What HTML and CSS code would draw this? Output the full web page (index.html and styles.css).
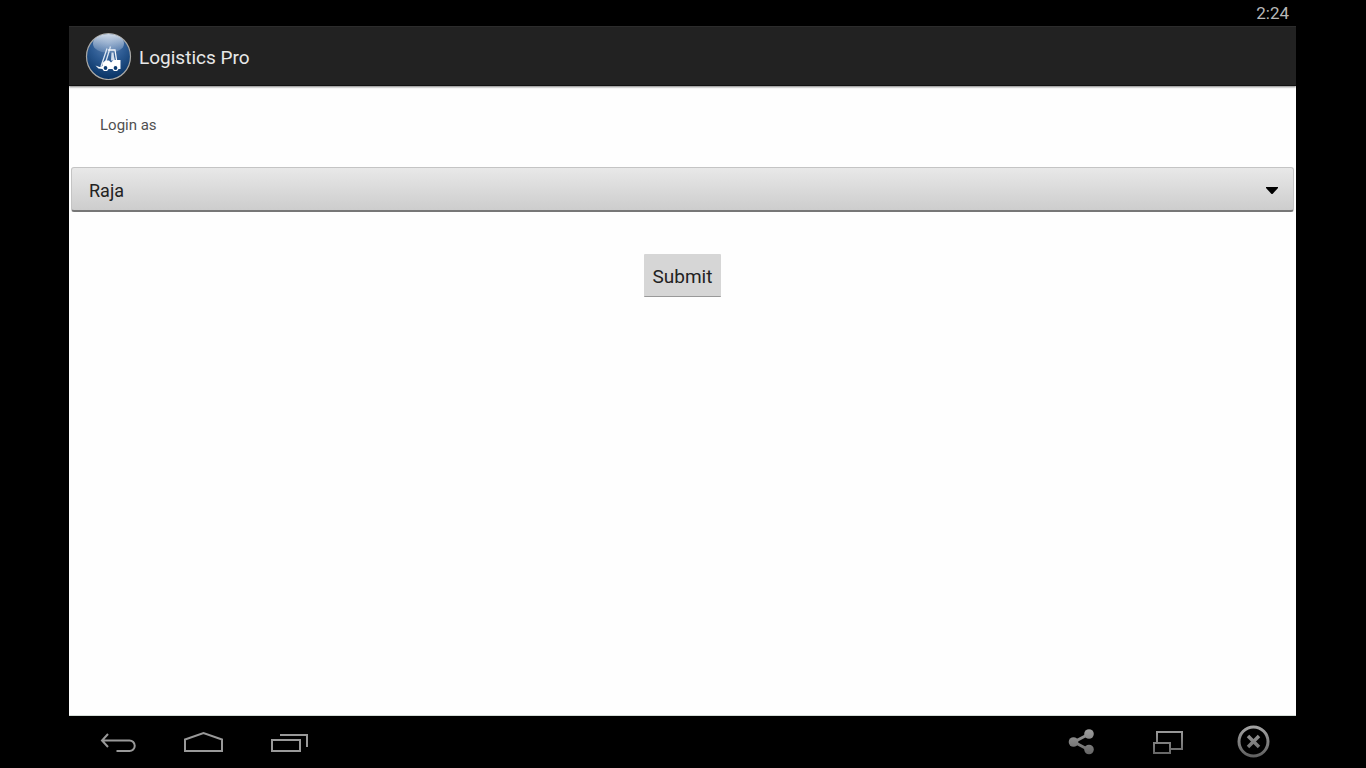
FILE: index.html
```html
<!DOCTYPE html>
<html lang="en">
<head>
<meta charset="utf-8">
<title>Logistics Pro</title>
<link rel="stylesheet" href="styles.css">
</head>
<body>
<div class="device">
  <div class="status-bar"><time>2:24</time></div>
  <header class="app-bar">
    <svg class="app-logo" viewBox="0 0 48 48" aria-hidden="true">
      <defs>
        <radialGradient id="ball" cx="0.5" cy="0.2" r="0.8">
          <stop offset="0" stop-color="#5f84b2"/>
          <stop offset="0.5" stop-color="#2c5a92"/>
          <stop offset="1" stop-color="#073263"/>
        </radialGradient>
        <linearGradient id="gloss" x1="0" y1="0" x2="0" y2="1">
          <stop offset="0" stop-color="#fff" stop-opacity="0.75"/>
          <stop offset="1" stop-color="#b9cbe6" stop-opacity="0.2"/>
        </linearGradient>
      </defs>
      <ellipse cx="24.5" cy="24.5" rx="22" ry="23" fill="url(#ball)" stroke="#aaa9a6" stroke-width="1.2"/>
      <ellipse cx="24.5" cy="11.5" rx="15.5" ry="9.5" fill="url(#gloss)"/>
      <path d="M17 34.500 23 16.500M20.500 34 26.500 14.500" stroke="#dbe6f2" stroke-width="1.3" fill="none"/>
      <path d="M24 18H31L32.500 28" stroke="#f2f5fa" stroke-width="1.300" fill="none"/>
      <path d="M27.500 20.500h2l.5 4 1 4h-4z" fill="#d3deed"/>
      <path d="M11.500 33.500l4 1.500 3-1v-3l3-2.500h3.500l2 2 2.500-2.500H36.500V37H18.500l-4-.5z" fill="#fff"/>
      <circle cx="21.500" cy="36" r="2.500" fill="#0b3a70" stroke="#fff" stroke-width="1.200"/>
      <circle cx="31.500" cy="36" r="2.500" fill="#0b3a70" stroke="#fff" stroke-width="1.200"/>
    </svg>
    <h1 class="app-title">Logistics Pro</h1>
  </header>
  <main class="content">
    <form class="login">
      <label class="login-label" for="user">Login as</label>
      <div class="spinner">
        <select class="spinner-select" id="user"><option>Raja</option></select>
        <svg class="spinner-arrow" viewBox="0 0 12 7" aria-hidden="true"><path d="M0 0h12v1L6.500 7h-1L0 1z"/></svg>
      </div>
      <button class="submit" type="button">Submit</button>
    </form>
  </main>
  <nav class="nav-bar" aria-label="System navigation">
    <svg class="defs" aria-hidden="true"><defs>
      <linearGradient id="metal" gradientUnits="userSpaceOnUse" x1="0" y1="5" x2="0" y2="35">
        <stop offset="0" stop-color="#a2a2a2"/><stop offset="1" stop-color="#606060"/>
      </linearGradient></defs></svg>
    <div class="nav-group">
      <button class="nav-button" type="button" aria-label="Back">
        <svg viewBox="0 0 40 40"><path d="M10 12 4 18.500 10 25M4 18.500H31.500a5.200 5.200 0 0 1 0 10.500H18.500" fill="none" stroke="#999" stroke-width="2"/></svg>
      </button>
      <button class="nav-button" type="button" aria-label="Home">
        <svg viewBox="0 0 40 40"><path d="M1 29V17.500L19.500 11 38 17.500V29z" fill="none" stroke="#999" stroke-width="2"/></svg>
      </button>
      <button class="nav-button" type="button" aria-label="Recent apps">
        <svg viewBox="0 0 40 40"><path d="M2 18H30V29H2zM10 13H37V25" fill="none" stroke="#999" stroke-width="2"/></svg>
      </button>
    </div>
    <div class="nav-group">
      <button class="nav-button" type="button" aria-label="Share">
        <svg viewBox="0 0 40 40"><path d="M27 12 12 20 27 28" fill="none" stroke="url(#metal)" stroke-width="3"/><g fill="url(#metal)"><circle cx="27" cy="12" r="4.800"/><circle cx="11.500" cy="20" r="4.800"/><circle cx="27" cy="27.500" r="4.800"/></g></svg>
      </button>
      <button class="nav-button" type="button" aria-label="Window mode">
        <svg viewBox="0 0 40 40"><path d="M9 20V10H34V27H23M6 21H22V31H6z" fill="none" stroke="url(#metal)" stroke-width="2"/></svg>
      </button>
      <button class="nav-button" type="button" aria-label="Close">
        <svg viewBox="0 0 40 40"><g fill="none" stroke="url(#metal)"><circle cx="19.500" cy="19.500" r="14.500" stroke-width="3"/><path d="M14 14 25 25M25 14 14 25" stroke-width="3.500"/></g></svg>
      </button>
    </div>
  </nav>
</div>
</body>
</html>
```
FILE: styles.css
```css
* { box-sizing: border-box; }

body {
  margin: 0;
  background: #000;
  font-family: Roboto, "Liberation Sans", sans-serif;
}

.device {
  display: flex;
  flex-direction: column;
  min-height: 100vh;
  padding: 0 70px 0 69px;
}

.status-bar {
  height: 26px;
  padding-right: 7px;
  color: #b8b8b8;
  font-size: 17px;
  line-height: 26px;
  text-align: right;
}

.app-bar {
  display: flex;
  align-items: center;
  gap: 7px;
  height: 60px;
  padding-left: 15px;
  background: #222;
  border-top: 1px solid #2c2c2c;
  border-bottom: 1px solid #111;
  box-shadow: 0 1px 2px rgba(0, 0, 0, 0.5);
  z-index: 1;
}

.app-logo {
  width: 48px;
  height: 48px;
}

.app-title {
  margin: 0;
  padding-top: 2px;
  color: #e8e8e8;
  font-size: 19px;
  font-weight: 400;
}

.content {
  flex: 1;
  background: #fefefe;
  border-bottom: 1px solid #d5ded8;
}

.login {
  display: flex;
  flex-direction: column;
  padding: 29px 2px 0;
}

.login-label {
  margin-left: 29px;
  color: #505050;
  font-size: 15px;
  line-height: 20px;
}

.spinner {
  display: grid;
  align-items: center;
  margin-top: 32px;
}

.spinner-select,
.spinner-arrow {
  grid-area: 1 / 1;
}

.spinner-select {
  appearance: none;
  width: 100%;
  height: 45px;
  padding: 2px 17px 0;
  border: 1px solid #c4c4c4;
  border-bottom: 2px solid #777;
  border-radius: 3px;
  background: linear-gradient(#e8e8e8, #cdcdcd);
  color: #222;
  font-family: inherit;
  font-size: 18px;
}

.spinner-arrow {
  justify-self: end;
  width: 12px;
  height: 7px;
  margin: 2px 16px 0 0;
  pointer-events: none;
}

.submit {
  align-self: center;
  height: 43px;
  margin-top: 42px;
  padding: 2px 9px 0;
  border: 0;
  border-bottom: 1px solid #999;
  border-radius: 1px;
  background: #d6d6d6;
  color: #222;
  font-family: inherit;
  font-size: 19px;
}

.nav-bar {
  display: flex;
  align-items: center;
  justify-content: space-between;
  height: 52px;
  padding: 0 22px 0 29px;
}

.defs {
  position: absolute;
  width: 0;
  height: 0;
}

.nav-group {
  display: flex;
  gap: 46px;
}

.nav-button {
  width: 40px;
  height: 40px;
  padding: 0;
  border: 0;
  background: none;
}

.nav-button svg {
  display: block;
  width: 40px;
  height: 40px;
}
```
